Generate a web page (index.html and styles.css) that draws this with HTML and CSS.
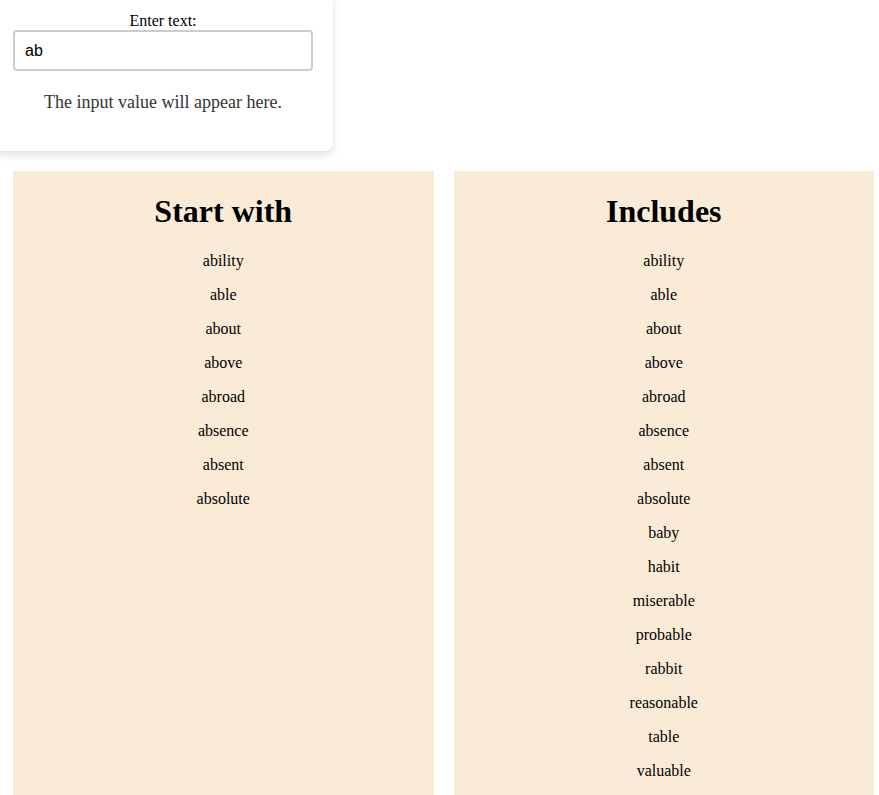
FILE: index.html
```html
<!DOCTYPE html>
<html>
<head>
<meta charset="utf-8">
<link rel="stylesheet" href="styles.css">
</head>
<body>
<div class="card">
  <label class="label" for="txt">Enter text:</label>
  <input id="txt" class="field" type="text" value="ab">
  <p class="output">The input value will appear here.</p>
</div>
<div class="panels">
  <div class="panel">
    <h1>Start with</h1>
    <p>ability</p><p>able</p><p>about</p><p>above</p><p>abroad</p><p>absence</p><p>absent</p><p>absolute</p>
  </div>
  <div class="panel">
    <h1>Includes</h1>
    <p>ability</p><p>able</p><p>about</p><p>above</p><p>abroad</p><p>absence</p><p>absent</p><p>absolute</p><p>baby</p><p>habit</p><p>miserable</p><p>probable</p><p>rabbit</p><p>reasonable</p><p>table</p><p>valuable</p>
  </div>
</div>
</body>
</html>
```
FILE: styles.css
```css
html, body {
  margin: 0;
  padding: 0;
  background: #fff;
  font-family: "Liberation Serif", "Times New Roman", serif;
  color: #000;
}
.card {
  width: 300px;
  margin: -8px 0 0 -7px;
  padding: 20px;
  background: #fff;
  border-radius: 8px;
  box-shadow: 0 4px 8px rgba(0, 0, 0, 0.12);
  display: flex;
  flex-direction: column;
  align-items: center;
  text-align: center;
}
.label {
  font-size: 16px;
  line-height: 18px;
}
.field {
  box-sizing: border-box;
  width: 300px;
  height: 41px;
  margin: 0;
  padding: 0 10px;
  border: 2px solid #ccc;
  border-radius: 4px;
  font-family: "Liberation Sans", Arial, sans-serif;
  font-size: 16px;
  color: #000;
  outline: none;
}
.output {
  font-size: 18px;
  color: #333;
  margin: 21px 0 18px;
}
.panels {
  display: flex;
  gap: 20px;
  margin: 20px 5px 0 13px;
}
.panel {
  flex: 1;
  background: #faebd7;
  display: flex;
  flex-direction: column;
  align-items: center;
  text-align: center;
}
.panel h1 {
  font-size: 32px;
  margin: 21.5px 0 22.5px;
}
.panel p {
  font-size: 16px;
  margin: 0 0 16px;
}
```
